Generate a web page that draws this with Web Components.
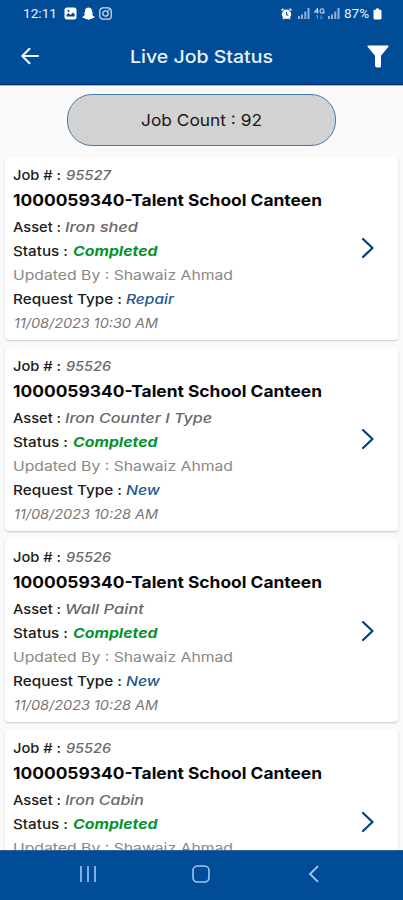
<!DOCTYPE html>
<html lang="en"><head><meta charset="utf-8"><title>Live Job Status</title>
<style>html,body{margin:0;height:100%;overflow:hidden;background:#fafafa;font-family:Inter,"Open Sans",sans-serif}</style></head>
<body><job-screen></job-screen>
<script>
const define=(name,html,init)=>{
  const t=document.createElement('template');t.innerHTML=html;
  customElements.define(name,class extends HTMLElement{
    connectedCallback(){
      if(this.shadowRoot)return;
      this.attachShadow({mode:'open'}).append(t.content.cloneNode(true));
      if(init)init(this,this.shadowRoot);
    }
  });
};
// Text widened to a given width.
define('fit-text',`<style>:host{display:inline-block;white-space:pre;flex:none}span{display:inline-block;transform-origin:0 50%}</style><span></span>`,(el,r)=>{
  const s=r.querySelector('span'),w=+el.getAttribute('w');
  s.textContent=el.getAttribute('text');
  const own=s.getBoundingClientRect().width;
  s.style.transform=`scaleX(${w/own})`;
  el.style.width=w+'px';
});
define('status-bar',`<style>:host{display:flex;height:28px;align-items:center;padding:0 21px 1px 23px;color:#e9f3ff;font:400 12.5px Roboto,sans-serif;box-sizing:border-box}
svg{display:block;flex:none}.l,.r{display:flex;align-items:center}.r{margin-left:auto}.l svg{margin-left:5px}.pct{margin-left:4px}</style>
<div class="l"><fit-text w="34" text="12:11"></fit-text>
<svg style="margin-left:7px" width="13" height="13" viewBox="0 0 13 13"><rect x=".5" y=".5" width="12" height="12" rx="2.5" fill="#fff"/><path d="M2.5 9.5V8l2-2 2 2 2.5-2.5 1.7 1.7v2.3z" fill="#004c96"/><circle cx="4.5" cy="3.8" r="1.1" fill="#004c96"/></svg>
<svg width="13" height="13" viewBox="0 0 13 13"><path d="M6.5.5C4.3.5 3 2 3 4v1.5l-1.2.2.1.8 1.1.6C2.6 8.4 1.8 9.2.4 9.7l.3 1.1 2 .4.4.8 1.5-.1 1.9 1 1.9-1 1.5.1.4-.8 2-.4.3-1.1C11.2 9.2 10.4 8.4 10 7.1l1.1-.6.1-.8-1.2-.2V4C10 2 8.700.5 6.500.5z" fill="#fff"/></svg>
<svg style="margin-left:4px" width="13" height="13" viewBox="0 0 13 13" fill="none" stroke="#c9dcf1" stroke-width="1.3"><rect x=".8" y=".8" width="11.400" height="11.400" rx="3.300"/><circle cx="6.500" cy="6.500" r="2.700"/><circle cx="9.700" cy="3.300" r=".3"/></svg></div>
<div class="r"><svg width="11" height="12" viewBox="0 0 11 12"><path d="M.5 2.500 2.500.700M10.500 2.500 8.500.700M2 11l1-1.500M9 11 8 9.500" stroke="#fff" stroke-width="1.500"/><circle cx="5.500" cy="6.300" r="4.700" fill="#fff"/><path d="M5.500 3.800v2.700l1.800 1" fill="none" stroke="#004c96" stroke-width="1.100"/></svg>
<svg style="margin-left:6px" width="12" height="11" viewBox="0 0 12 11" fill="#8db4d8"><path d="M0 8h2v3H0zM3 6.500h2V11H3zM6.300 3.500h2V11h-2zM9.500 0h2v11h-2z"/></svg>
<svg style="margin-left:4px" width="11" height="12" viewBox="0 0 11 12"><path d="M3.500 5.500V.700L.700 4h3.800M10 1.500C8 0 6 1 6 3s2 3 4 1.500V3H8.500" stroke="#c9dcf1" fill="none" stroke-width="1.100"/><path d="M3.500 11V7M2 8.500 3.500 7M7 7v4M8.500 9.500 7 11" stroke="#5f95c9" fill="none"/></svg>
<svg style="margin-left:3px" width="12" height="11" viewBox="0 0 12 11" fill="#8db4d8"><path d="M0 8h2v3H0zM3 6.500h2V11H3zM6.300 3.500h2V11h-2zM9.500 0h2v11h-2z"/></svg>
<fit-text class="pct" w="25" text="87%"></fit-text>
<svg style="margin-left:4px" width="9" height="12" viewBox="0 0 9 12"><path d="M3 .5h3v1.300h1.500q1 0 1 1v7.200q0 1.500-1.500 1.500H2Q.5 11.500.5 10V2.800q0-1 1-1H3z" fill="#fff"/></svg></div>`);
define('app-bar',`<style>:host{display:flex;height:57px;align-items:center;box-sizing:border-box;padding:0 14px 0 21px;color:#e9f3ff;font-size:17.500px;font-weight:500;border-bottom:1px solid #00277c}
svg{display:block}.f{margin-left:auto}fit-text{margin-left:91px}</style>
<svg width="18" height="18" viewBox="0 0 18 18" fill="none" stroke="#f3f8ff" stroke-width="2" stroke-linecap="round" stroke-linejoin="round"><path d="M17 9H1.500M8.500 1.800 1.300 9l7.200 7.200"/></svg>
<fit-text w="143" text="Live Job Status"></fit-text>
<svg class="f" width="22" height="23" viewBox="0 0 22 23"><path d="M1 .5h20q1 .4.4 1.300L14 10.700V21q0 1.500-1.500 1.500H9.800Q8 22 8 20.500v-9.800L.6 1.800Q0 .9 1 .5z" fill="#fff"/></svg>`);
define('job-count',`<style>:host{display:flex;align-items:center;justify-content:center;box-sizing:border-box;width:269px;height:52px;margin:9px 0 0 67px;padding-bottom:1px;border:1.500px solid #477ba8;border-radius:25px;background:#d2d2d2;color:#171717;font-size:16.500px;flex:none}</style><fit-text w="121" text="Job Count : 92"></fit-text>`);
define('job-card',`<style>:host{display:flex;align-items:center;box-sizing:border-box;height:183.200px;margin:0 5px 8px;padding:6px 23px 6px 8px;background:#fff;border-radius:4px;box-shadow:0 1px 2px #0003;flex:none;font-size:13.200px;color:#1c1c1c;font-weight:500}
.rows{flex:1;display:flex;flex-direction:column;align-self:flex-start}.row{display:flex;height:24.100px;line-height:24px}.title{height:28px;line-height:26px;font-size:16px;font-weight:700;color:#090909}
i{color:#686868;font-weight:500}.done{color:#07922c;font-weight:700}.kind{color:#24588f}.muted{color:#888;font-weight:400}svg{flex:none}.date{padding-left:1px;color:#777;font-weight:400}</style>
<div class="rows"></div><svg width="14" height="22" viewBox="0 0 14 22"><path d="m2 2 9.500 9L2 20" fill="none" stroke="#064083" stroke-width="2.300" stroke-linecap="round" stroke-linejoin="round"/></svg>`,(el,r)=>{
  const d=el.dataset,f=(w,t)=>`<fit-text w="${w}" text="${t}"></fit-text>`;
  const row=(w,l,gap,c,vw,v)=>`<div class="row">${f(w,l)}<i class="${c}" style="margin-left:${gap}px">${f(vw,v)}</i></div>`;
  r.querySelector('.rows').innerHTML=
   row(48,'Job # :',5,'',45,d.job)+
   `<div class="row title">${f(309,'1000059340-Talent School Canteen')}</div>`+
   row(48,'Asset :',4,'',d.aw,d.asset)+row(55,'Status :',5,'done',84.500,'Completed')+
   `<div class="row muted">${f(220,'Updated By : Shawaiz Ahmad')}</div>`+
   row(109,'Request Type :',4,'kind',d.kw,d.kind)+
   `<div class="row"><i class="date">${f(144,d.date)}</i></div>`;
});
define('nav-bar',`<style>:host{display:flex;align-items:center;justify-content:space-between;box-sizing:border-box;height:50px;padding:0 80px 3px 79px;background:#004c96;border-top:1px solid #2f659f;flex:none}svg{display:block}</style>
<svg width="18" height="18" viewBox="0 0 18 18"><path d="M2 1v16M9 1v16M16 1v16" stroke="#8db9e8" stroke-width="1.800"/></svg>
<svg width="18" height="18" viewBox="0 0 18 18"><rect x="1" y="1" width="16" height="16" rx="4.500" fill="none" stroke="#9fc8f2" stroke-width="1.600"/></svg>
<svg width="18" height="18" viewBox="-3 0 18 18"><path d="M10 1.200 2 9l8 7.800" fill="none" stroke="#a9ccef" stroke-width="1.800"/></svg>`);
define('job-screen',`<style>:host{display:flex;flex-direction:column;width:403px;height:900px;background:#fafafa;overflow:hidden}header{background:#004c96;flex:none;border-bottom:1px solid #a7b5e6;height:85px;box-sizing:content-box}
main{flex:1;min-height:0;overflow:hidden;display:flex;flex-direction:column}job-count{margin-top:8px}.list{display:flex;flex-direction:column;margin-top:10.600px}</style>
<header><status-bar></status-bar><app-bar></app-bar></header>
<main><job-count></job-count><div class="list">
<job-card data-job="95527" data-asset="Iron shed" data-aw="73" data-kind="Repair" data-kw="48" data-date="11/08/2023 10:30 AM"></job-card>
<job-card data-job="95526" data-asset="Iron Counter I Type" data-aw="147" data-kind="New" data-kw="34" data-date="11/08/2023 10:28 AM"></job-card>
<job-card data-job="95526" data-asset="Wall Paint" data-aw="79" data-kind="New" data-kw="34" data-date="11/08/2023 10:28 AM"></job-card>
<job-card data-job="95526" data-asset="Iron Cabin" data-aw="79" data-kind="New" data-kw="34" data-date="11/08/2023 10:28 AM"></job-card>
</div></main><nav-bar></nav-bar>`);
</script></body></html>
